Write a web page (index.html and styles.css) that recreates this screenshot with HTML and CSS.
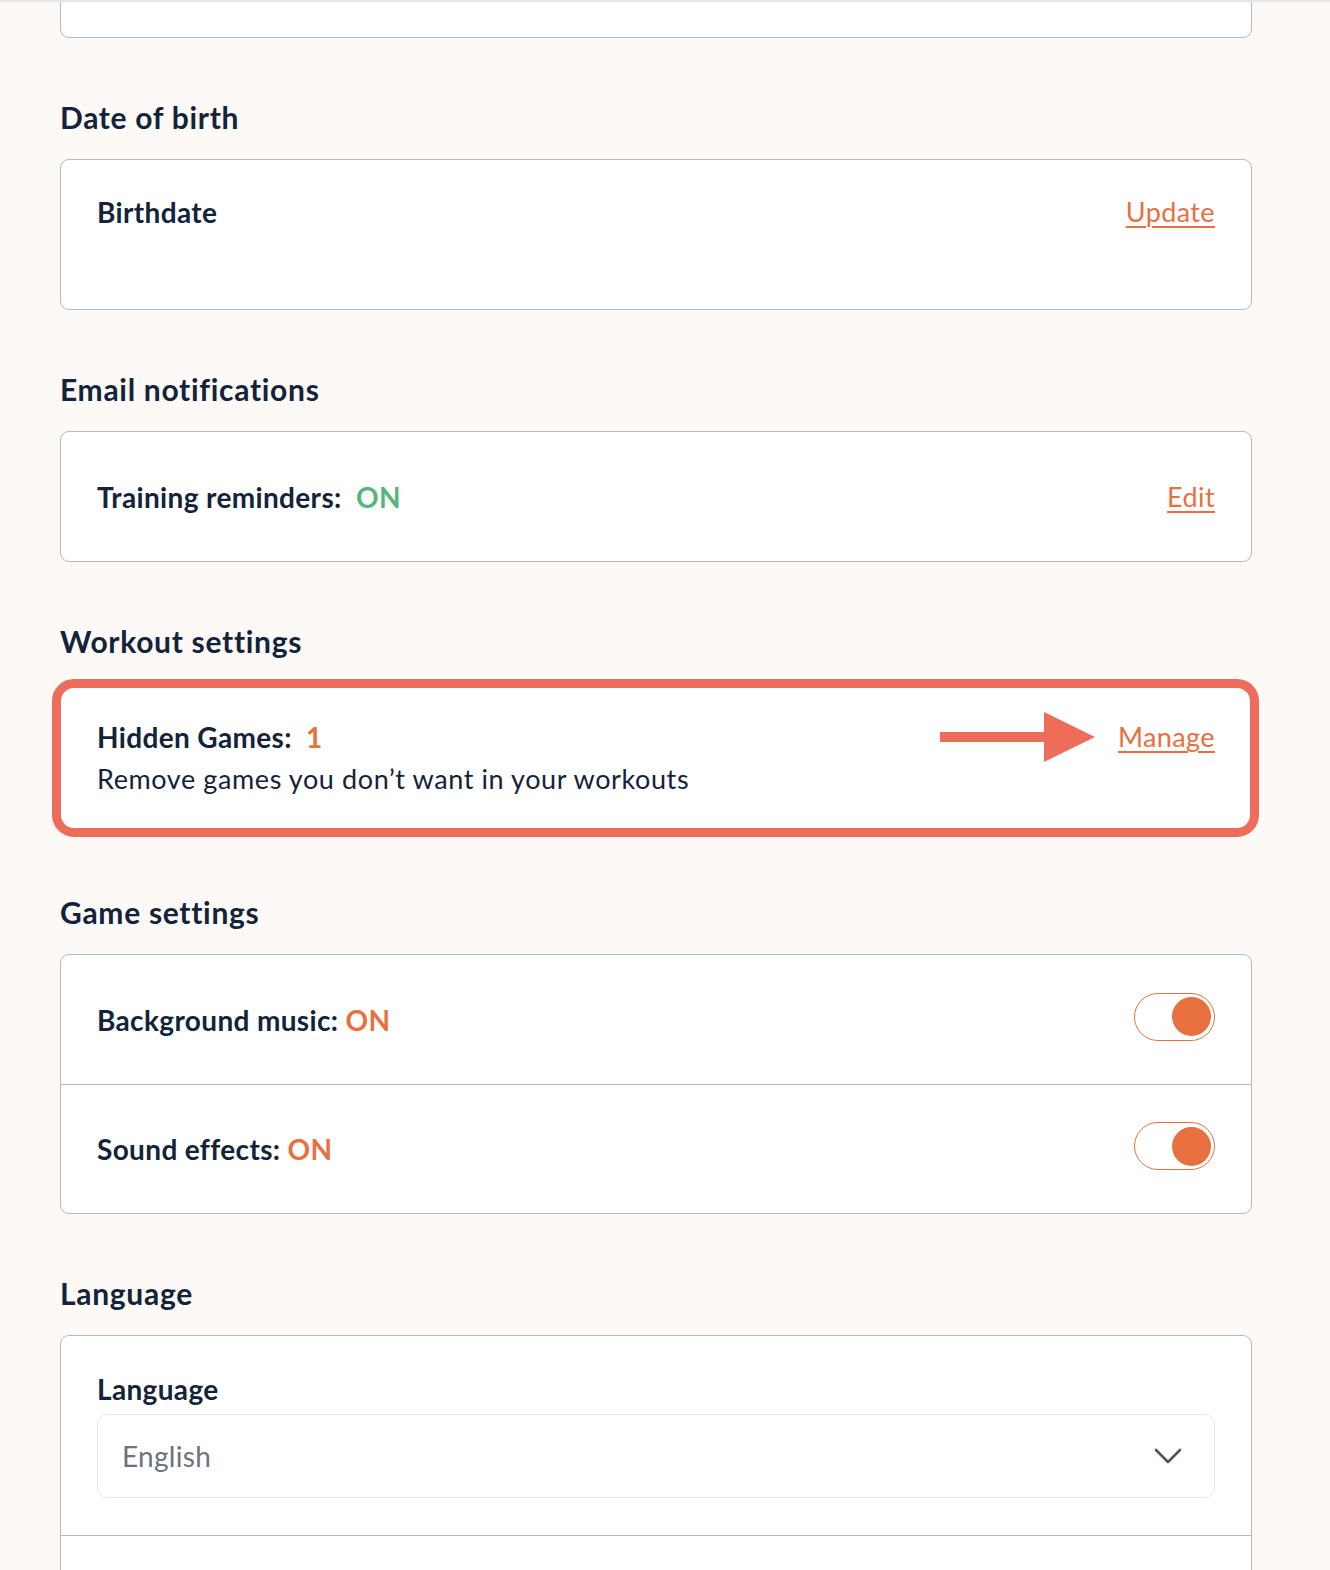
FILE: index.html
```html
<!DOCTYPE html>
<html lang="en">
<head>
<meta charset="utf-8">
<title>Settings</title>
<link rel="stylesheet" href="styles.css">
</head>
<body>
<div class="page">
  <div class="card card-cut"></div>

  <section class="section">
    <h2 class="section-title">Date of birth</h2>
    <div class="card card-dob">
      <div class="row-top">
        <span class="label">Birthdate</span>
        <a class="link" href="#">Update</a>
      </div>
    </div>
  </section>

  <section class="section">
    <h2 class="section-title">Email notifications</h2>
    <div class="card">
      <div class="row">
        <span class="label">Training reminders:&nbsp; <span class="on-green">ON</span></span>
        <a class="link" href="#">Edit</a>
      </div>
    </div>
  </section>

  <section class="section">
    <h2 class="section-title">Workout settings</h2>
    <div class="card card-highlighted">
      <div class="hidden-row">
        <div class="hidden-text">
          <div class="label">Hidden Games:&nbsp; <span class="on-orange">1</span></div>
          <div class="desc">Remove games you don’t want in your workouts</div>
        </div>
        <div class="hidden-action">
          <svg class="arrow" width="156" height="52" viewBox="0 0 156 52" aria-hidden="true">
            <rect x="0" y="21" width="108" height="10" fill="#ee6c5a"/>
            <polygon points="104,1 155,26 104,51" fill="#ee6c5a"/>
          </svg>
          <a class="link" href="#">Manage</a>
        </div>
      </div>
      <div class="highlight-ring"></div>
    </div>
  </section>

  <section class="section">
    <h2 class="section-title">Game settings</h2>
    <div class="card">
      <div class="row">
        <span class="label">Background music: <span class="on-orange">ON</span></span>
        <span class="toggle"><span class="knob"></span></span>
      </div>
      <div class="row row-divided">
        <span class="label">Sound effects: <span class="on-orange">ON</span></span>
        <span class="toggle"><span class="knob"></span></span>
      </div>
    </div>
  </section>

  <section class="section">
    <h2 class="section-title">Language</h2>
    <div class="card card-open">
      <div class="lang-block">
        <div class="label">Language</div>
        <div class="select">
          <span class="select-value">English</span>
          <svg class="chevron" width="28" height="16" viewBox="0 0 28 16" aria-hidden="true">
            <polyline points="2,2 14,14 26,2" fill="none" stroke="#4b5563" stroke-width="2.6" stroke-linecap="round" stroke-linejoin="round"/>
          </svg>
        </div>
      </div>
      <div class="lang-next"></div>
    </div>
  </section>
</div>
</body>
</html>
```

FILE: styles.css
```css
* { box-sizing: border-box; }

html, body {
  margin: 0;
  padding: 0;
  background: #fdf9f6;
}

body {
  font-family: "Lato", "Noto Sans", sans-serif;
  color: #13233a;
  border-top: 2px solid #e6e6e6;
}

.page {
  width: 1192px;
  margin-left: 60px;
  padding-bottom: 60px;
}

.card {
  position: relative;
  background: #ffffff;
  border: 1px solid #b9b9b9;
  border-radius: 9px;
}

.card-cut {
  height: 36px;
  border-top: none;
  border-top-left-radius: 0;
  border-top-right-radius: 0;
}

.section {
  margin-top: 61px;
}

.section-title {
  margin: 0 0 24px;
  font-size: 30px;
  line-height: 36px;
  font-weight: 700;
  letter-spacing: 0.7px;
  color: #13233a;
}

.label {
  font-size: 28px;
  line-height: 32px;
  font-weight: 700;
  letter-spacing: 0.35px;
  color: #13233a;
}

.link {
  font-size: 27px;
  line-height: 32px;
  letter-spacing: 0.4px;
  color: #e8703f;
  text-decoration: underline;
  text-underline-offset: 4px;
  text-decoration-thickness: 2px;
}

.on-green { color: #58b67b; }
.on-orange { color: #e8703f; }

.card-dob {
  height: 151px;
  padding: 36px 36px 0;
}

.row-top {
  display: flex;
  justify-content: space-between;
  align-items: center;
}

.row {
  height: 129px;
  padding: 0 36px;
  display: flex;
  justify-content: space-between;
  align-items: center;
}

.row-divided {
  border-top: 1px solid #b9b9b9;
  height: 129px;
}

.card-highlighted {
  height: 150px;
  padding: 32px 36px 0;
}

.hidden-row {
  display: flex;
  justify-content: space-between;
  align-items: flex-start;
}

.hidden-text .label {
  line-height: 42px;
}

.desc {
  font-size: 27px;
  line-height: 42px;
  font-weight: 400;
  letter-spacing: 0.6px;
  color: #13233a;
}

.hidden-action {
  display: flex;
  align-items: center;
  gap: 22px;
  height: 42px;
}

.arrow {
  display: block;
}

.highlight-ring {
  position: absolute;
  left: -9px;
  top: -5px;
  right: -8px;
  bottom: -5px;
  border: 9px solid #ee6c5a;
  border-radius: 22px;
  pointer-events: none;
}

.toggle {
  position: relative;
  width: 81px;
  height: 48px;
  border: 1.5px solid #e8703f;
  border-radius: 24px;
  margin-top: -6px;
  display: flex;
  align-items: center;
  justify-content: flex-end;
  padding-right: 3px;
}

.knob {
  width: 39px;
  height: 39px;
  border-radius: 50%;
  background: #e8703f;
}

.card-open {
  border-bottom: none;
  border-bottom-left-radius: 0;
  border-bottom-right-radius: 0;
}

.lang-block {
  padding: 37px 36px 37px;
}

.select {
  margin-top: 9px;
  height: 84px;
  border: 1px solid #e5e5e5;
  border-radius: 10px;
  padding: 0 32px 0 24px;
  display: flex;
  justify-content: space-between;
  align-items: center;
}

.select-value {
  font-size: 28px;
  color: #6b7280;
  font-weight: 400;
  letter-spacing: 0.3px;
}

.chevron {
  display: block;
}

.lang-next {
  border-top: 1px solid #b9b9b9;
  height: 60px;
}
```
